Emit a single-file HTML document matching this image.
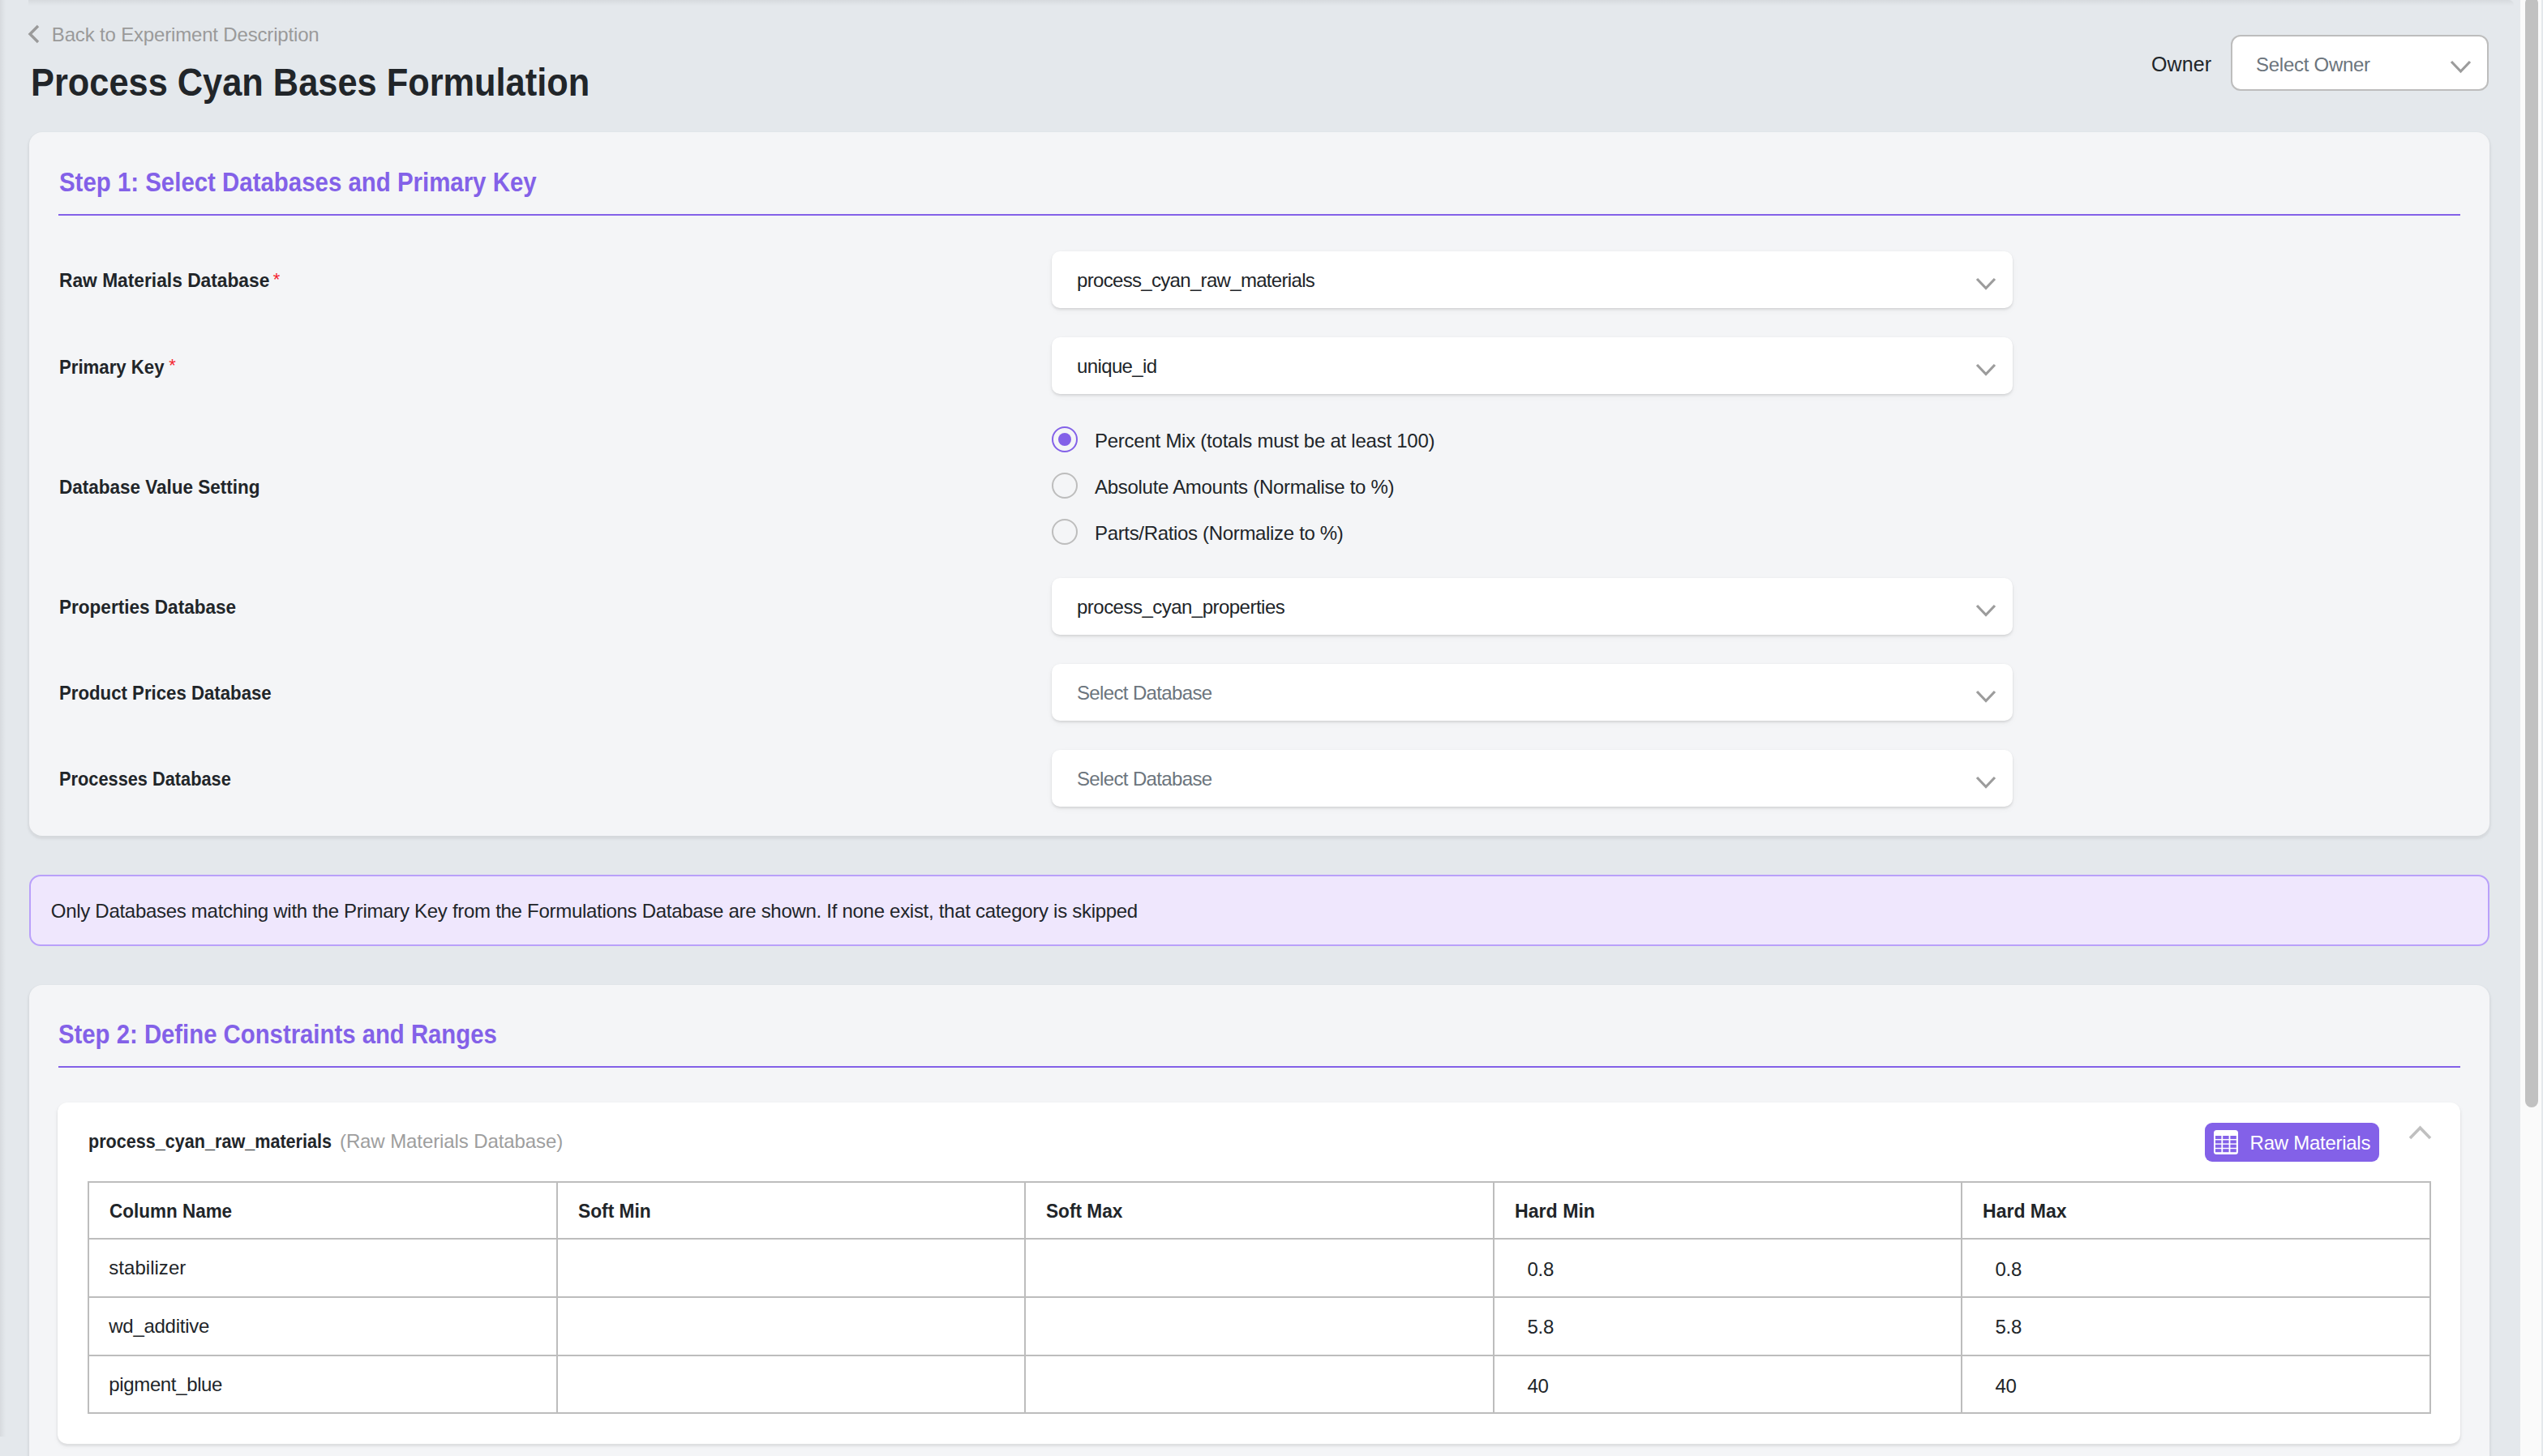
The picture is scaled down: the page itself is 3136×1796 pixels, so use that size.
<!DOCTYPE html>
<html><head><meta charset="utf-8"><title>Process Cyan Bases Formulation</title>
<style>
html,body{margin:0;padding:0;background:#e4e8ec;overflow:hidden}
#root{width:3136px;height:1796px;position:relative;overflow:hidden;background:#e4e8ec;font-family:"Liberation Sans",sans-serif;transform-origin:0 0}
.t{position:absolute;white-space:nowrap}
</style></head><body><div id="root">
<div style="position:absolute;left:0;top:0;width:7px;height:1772px;background:linear-gradient(90deg,rgba(0,0,0,0.06),rgba(0,0,0,0))"></div>
<div style="position:absolute;left:35px;top:0;width:3065px;height:7px;border-top-right-radius:6px;background:linear-gradient(180deg,rgba(0,0,0,0.06),rgba(0,0,0,0))"></div>
<div style="position:absolute;left:3108px;top:0;width:26px;height:1796px;background:#fafafa"></div>
<div style="position:absolute;left:3114px;top:-4px;width:16px;height:1370px;background:#c1c1c1;border-radius:8px"></div>
<svg style="position:absolute;left:33px;top:29px" width="18" height="26"><polyline points="14,3 4,13 14,23" fill="none" stroke="#9a9a9a" stroke-width="3.4"/></svg>
<div class="t" style="left:63.8px;top:28.18px;font-size:24px;line-height:29px;font-weight:400;color:#9a9a9a;letter-spacing:-0.17px;">Back to Experiment Description</div>
<div class="t" style="left:37.5px;top:71.81px;font-size:49px;line-height:59px;font-weight:700;color:#212529;transform:scaleX(0.8849);transform-origin:0 0">Process Cyan Bases Formulation</div>
<div class="t" style="left:2653.0px;top:63.83px;font-size:25px;line-height:30px;font-weight:400;color:#212529;letter-spacing:0.1px;">Owner</div>
<div style="position:absolute;left:2751px;top:43px;width:318px;height:69px;box-sizing:border-box;border:2px solid #bdbdbd;border-radius:12px;background:#fff"></div>
<div class="t" style="left:2782.0px;top:64.68px;font-size:24px;line-height:29px;font-weight:400;color:#6c757d;letter-spacing:-0.27px;">Select Owner</div>
<svg style="position:absolute;left:3019px;top:72px" width="31" height="22"><polyline points="4,4 15.5,16.0 27,4" fill="none" stroke="#9c9c9c" stroke-width="3.2" stroke-linecap="butt" stroke-linejoin="miter"/></svg>
<div style="position:absolute;left:36px;top:163px;width:3034px;height:868px;background:#f4f5f7;border-radius:16px;box-shadow:0 2px 2px 2px rgba(0,0,0,0.035),0 3px 6px rgba(0,0,0,0.04)"></div>
<div class="t" style="left:72.7px;top:204.56px;font-size:33px;line-height:40px;font-weight:700;color:#8361e8;transform:scaleX(0.8914);transform-origin:0 0">Step 1: Select Databases and Primary Key</div>
<div style="position:absolute;left:72px;top:264px;width:2962px;height:2px;background:#8361e8"></div>
<div class="t" style="left:72.5px;top:331.38px;font-size:24px;line-height:29px;font-weight:700;color:#212529;transform:scaleX(0.9484);transform-origin:0 0">Raw Materials Database</div>
<div class="t" style="left:336.7px;top:333.7px;font-size:22px;line-height:22px;color:#f5222d;font-weight:400">*</div>
<div class="t" style="left:72.5px;top:437.58px;font-size:24px;line-height:29px;font-weight:700;color:#212529;transform:scaleX(0.9248);transform-origin:0 0">Primary Key</div>
<div class="t" style="left:208.2px;top:439.9px;font-size:22px;line-height:22px;color:#f5222d;font-weight:400">*</div>
<div class="t" style="left:72.5px;top:586.18px;font-size:24px;line-height:29px;font-weight:700;color:#212529;transform:scaleX(0.9371);transform-origin:0 0">Database Value Setting</div>
<div class="t" style="left:72.5px;top:734.18px;font-size:24px;line-height:29px;font-weight:700;color:#212529;transform:scaleX(0.9397);transform-origin:0 0">Properties Database</div>
<div class="t" style="left:72.5px;top:840.18px;font-size:24px;line-height:29px;font-weight:700;color:#212529;transform:scaleX(0.9254);transform-origin:0 0">Product Prices Database</div>
<div class="t" style="left:72.5px;top:946.18px;font-size:24px;line-height:29px;font-weight:700;color:#212529;transform:scaleX(0.9073);transform-origin:0 0">Processes Database</div>
<div style="position:absolute;left:1297px;top:310px;width:1185px;height:70px;background:#fff;border-radius:10px;box-shadow:0 2px 3px rgba(0,0,0,0.1),0 3px 8px rgba(0,0,0,0.04),0 0 2px rgba(0,0,0,0.04)"></div>
<div class="t" style="left:1328.0px;top:331.18px;font-size:24px;line-height:29px;font-weight:400;color:#212529;letter-spacing:-0.68px;">process_cyan_raw_materials</div>
<svg style="position:absolute;left:2434px;top:340px" width="30" height="22"><polyline points="4,4 15.0,15.5 26,4" fill="none" stroke="#9c9c9c" stroke-width="3.2" stroke-linecap="butt" stroke-linejoin="miter"/></svg>
<div style="position:absolute;left:1297px;top:416px;width:1185px;height:70px;background:#fff;border-radius:10px;box-shadow:0 2px 3px rgba(0,0,0,0.1),0 3px 8px rgba(0,0,0,0.04),0 0 2px rgba(0,0,0,0.04)"></div>
<div class="t" style="left:1328.0px;top:437.18px;font-size:24px;line-height:29px;font-weight:400;color:#212529;letter-spacing:-0.62px;">unique_id</div>
<svg style="position:absolute;left:2434px;top:446px" width="30" height="22"><polyline points="4,4 15.0,15.5 26,4" fill="none" stroke="#9c9c9c" stroke-width="3.2" stroke-linecap="butt" stroke-linejoin="miter"/></svg>
<div style="position:absolute;left:1297px;top:713px;width:1185px;height:70px;background:#fff;border-radius:10px;box-shadow:0 2px 3px rgba(0,0,0,0.1),0 3px 8px rgba(0,0,0,0.04),0 0 2px rgba(0,0,0,0.04)"></div>
<div class="t" style="left:1328.0px;top:734.18px;font-size:24px;line-height:29px;font-weight:400;color:#212529;letter-spacing:-0.52px;">process_cyan_properties</div>
<svg style="position:absolute;left:2434px;top:743px" width="30" height="22"><polyline points="4,4 15.0,15.5 26,4" fill="none" stroke="#9c9c9c" stroke-width="3.2" stroke-linecap="butt" stroke-linejoin="miter"/></svg>
<div style="position:absolute;left:1297px;top:819px;width:1185px;height:70px;background:#fff;border-radius:10px;box-shadow:0 2px 3px rgba(0,0,0,0.1),0 3px 8px rgba(0,0,0,0.04),0 0 2px rgba(0,0,0,0.04)"></div>
<div class="t" style="left:1328.0px;top:840.18px;font-size:24px;line-height:29px;font-weight:400;color:#6c757d;letter-spacing:-0.64px;">Select Database</div>
<svg style="position:absolute;left:2434px;top:849px" width="30" height="22"><polyline points="4,4 15.0,15.5 26,4" fill="none" stroke="#9c9c9c" stroke-width="3.2" stroke-linecap="butt" stroke-linejoin="miter"/></svg>
<div style="position:absolute;left:1297px;top:925px;width:1185px;height:70px;background:#fff;border-radius:10px;box-shadow:0 2px 3px rgba(0,0,0,0.1),0 3px 8px rgba(0,0,0,0.04),0 0 2px rgba(0,0,0,0.04)"></div>
<div class="t" style="left:1328.0px;top:946.18px;font-size:24px;line-height:29px;font-weight:400;color:#6c757d;letter-spacing:-0.64px;">Select Database</div>
<svg style="position:absolute;left:2434px;top:955px" width="30" height="22"><polyline points="4,4 15.0,15.5 26,4" fill="none" stroke="#9c9c9c" stroke-width="3.2" stroke-linecap="butt" stroke-linejoin="miter"/></svg>
<div style="position:absolute;left:1297px;top:526px;width:32px;height:32px;box-sizing:border-box;border:2px solid #8361e8;border-radius:50%;background:transparent"><div style="position:absolute;left:6px;top:6px;width:16px;height:16px;border-radius:50%;background:#8361e8"></div></div>
<div class="t" style="left:1350.0px;top:528.98px;font-size:24px;line-height:29px;font-weight:400;color:#212529;letter-spacing:-0.25px;">Percent Mix (totals must be at least 100)</div>
<div style="position:absolute;left:1297px;top:583px;width:32px;height:32px;box-sizing:border-box;border:2px solid #bdbdbd;border-radius:50%;background:transparent"></div>
<div class="t" style="left:1350.0px;top:585.98px;font-size:24px;line-height:29px;font-weight:400;color:#212529;letter-spacing:-0.29px;">Absolute Amounts (Normalise to %)</div>
<div style="position:absolute;left:1297px;top:640px;width:32px;height:32px;box-sizing:border-box;border:2px solid #bdbdbd;border-radius:50%;background:transparent"></div>
<div class="t" style="left:1350.0px;top:642.98px;font-size:24px;line-height:29px;font-weight:400;color:#212529;letter-spacing:-0.33px;">Parts/Ratios (Normalize to %)</div>
<div style="position:absolute;left:36px;top:1079px;width:3034px;height:88px;box-sizing:border-box;border:2px solid #b9a0fa;border-radius:14px;background:#efe7fd"></div>
<div class="t" style="left:62.8px;top:1108.88px;font-size:24px;line-height:29px;font-weight:400;color:#212529;letter-spacing:-0.29px;">Only Databases matching with the Primary Key from the Formulations Database are shown. If none exist, that category is skipped</div>
<div style="position:absolute;left:36px;top:1215px;width:3034px;height:700px;background:#f4f5f7;border-radius:16px;box-shadow:0 2px 2px 2px rgba(0,0,0,0.035),0 3px 6px rgba(0,0,0,0.04)"></div>
<div class="t" style="left:72.3px;top:1255.76px;font-size:33px;line-height:40px;font-weight:700;color:#8361e8;transform:scaleX(0.8883);transform-origin:0 0">Step 2: Define Constraints and Ranges</div>
<div style="position:absolute;left:72px;top:1315px;width:2962px;height:2px;background:#8361e8"></div>
<div style="position:absolute;left:71px;top:1360px;width:2963px;height:421px;background:#fff;border-radius:12px;box-shadow:0 2px 2px 1px rgba(0,0,0,0.05),0 3px 6px rgba(0,0,0,0.05)"></div>
<div class="t" style="left:109.3px;top:1392.98px;font-size:24px;line-height:29px;font-weight:700;color:#212529;transform:scaleX(0.8994);transform-origin:0 0">process_cyan_raw_materials</div>
<div class="t" style="left:419.0px;top:1392.98px;font-size:24px;line-height:29px;font-weight:400;color:#9e9e9e;letter-spacing:-0.1px;">(Raw Materials Database)</div>
<div style="position:absolute;left:2719px;top:1385px;width:215px;height:48px;background:#8361e8;border-radius:9px"></div>
<svg style="position:absolute;left:2730px;top:1394px" width="30" height="30" viewBox="0 0 30 30"><rect x="0" y="0" width="30" height="30" rx="3.5" fill="#fff"/><rect x="2" y="7" width="7.4" height="4" fill="#8361e8"/><rect x="2" y="12.4" width="7.4" height="4" fill="#8361e8"/><rect x="2" y="17.8" width="7.4" height="4" fill="#8361e8"/><rect x="2" y="23.2" width="7.4" height="4" fill="#8361e8"/><rect x="11.2" y="7" width="7.4" height="4" fill="#8361e8"/><rect x="11.2" y="12.4" width="7.4" height="4" fill="#8361e8"/><rect x="11.2" y="17.8" width="7.4" height="4" fill="#8361e8"/><rect x="11.2" y="23.2" width="7.4" height="4" fill="#8361e8"/><rect x="20.4" y="7" width="7.4" height="4" fill="#8361e8"/><rect x="20.4" y="12.4" width="7.4" height="4" fill="#8361e8"/><rect x="20.4" y="17.8" width="7.4" height="4" fill="#8361e8"/><rect x="20.4" y="23.2" width="7.4" height="4" fill="#8361e8"/></svg>
<div class="t" style="left:2774.6px;top:1395.48px;font-size:24px;line-height:29px;font-weight:400;color:#fff;letter-spacing:-0.27px;">Raw Materials</div>
<svg style="position:absolute;left:2967px;top:1385px" width="34" height="24"><polyline points="5,19 17.5,6.2 30,19" fill="none" stroke="#c0c0c0" stroke-width="3.6"/></svg>
<div style="position:absolute;left:108px;top:1457px;width:2890px;height:287px;box-sizing:border-box;border:2px solid #bdbdbd"></div>
<div style="position:absolute;left:686px;top:1457px;width:2px;height:287px;background:#bdbdbd"></div>
<div style="position:absolute;left:1263px;top:1457px;width:2px;height:287px;background:#bdbdbd"></div>
<div style="position:absolute;left:1841px;top:1457px;width:2px;height:287px;background:#bdbdbd"></div>
<div style="position:absolute;left:2418px;top:1457px;width:2px;height:287px;background:#bdbdbd"></div>
<div style="position:absolute;left:108px;top:1527px;width:2890px;height:2px;background:#bdbdbd"></div>
<div style="position:absolute;left:108px;top:1599px;width:2890px;height:2px;background:#bdbdbd"></div>
<div style="position:absolute;left:108px;top:1671px;width:2890px;height:2px;background:#bdbdbd"></div>
<div class="t" style="left:134.6px;top:1478.98px;font-size:24px;line-height:29px;font-weight:700;color:#212529;transform:scaleX(0.9366);transform-origin:0 0">Column Name</div>
<div class="t" style="left:712.6px;top:1478.98px;font-size:24px;line-height:29px;font-weight:700;color:#212529;transform:scaleX(0.9474);transform-origin:0 0">Soft Min</div>
<div class="t" style="left:1290.3px;top:1478.98px;font-size:24px;line-height:29px;font-weight:700;color:#212529;transform:scaleX(0.9436);transform-origin:0 0">Soft Max</div>
<div class="t" style="left:1868.3px;top:1478.98px;font-size:24px;line-height:29px;font-weight:700;color:#212529;transform:scaleX(0.9641);transform-origin:0 0">Hard Min</div>
<div class="t" style="left:2445.3px;top:1478.98px;font-size:24px;line-height:29px;font-weight:700;color:#212529;transform:scaleX(0.9596);transform-origin:0 0">Hard Max</div>
<div class="t" style="left:134.3px;top:1549.18px;font-size:24px;line-height:29px;font-weight:400;color:#212529;letter-spacing:0.03px;">stabilizer</div>
<div class="t" style="left:1883.5px;top:1550.68px;font-size:24px;line-height:29px;font-weight:400;color:#212529;letter-spacing:-0.3px;">0.8</div>
<div class="t" style="left:2460.5px;top:1550.68px;font-size:24px;line-height:29px;font-weight:400;color:#212529;letter-spacing:-0.3px;">0.8</div>
<div class="t" style="left:134.3px;top:1620.68px;font-size:24px;line-height:29px;font-weight:400;color:#212529;letter-spacing:-0.28px;">wd_additive</div>
<div class="t" style="left:1883.5px;top:1622.18px;font-size:24px;line-height:29px;font-weight:400;color:#212529;letter-spacing:-0.3px;">5.8</div>
<div class="t" style="left:2460.5px;top:1622.18px;font-size:24px;line-height:29px;font-weight:400;color:#212529;letter-spacing:-0.3px;">5.8</div>
<div class="t" style="left:134.3px;top:1693.18px;font-size:24px;line-height:29px;font-weight:400;color:#212529;letter-spacing:-0.36px;">pigment_blue</div>
<div class="t" style="left:1883.5px;top:1694.68px;font-size:24px;line-height:29px;font-weight:400;color:#212529;letter-spacing:-0.3px;">40</div>
<div class="t" style="left:2460.5px;top:1694.68px;font-size:24px;line-height:29px;font-weight:400;color:#212529;letter-spacing:-0.3px;">40</div>
</div>
<script>(function(){var w=window.innerWidth;if(w&&Math.abs(w-3136)>2){document.getElementById("root").style.transform="scale("+(w/3136)+")";}})();</script>
</body></html>
